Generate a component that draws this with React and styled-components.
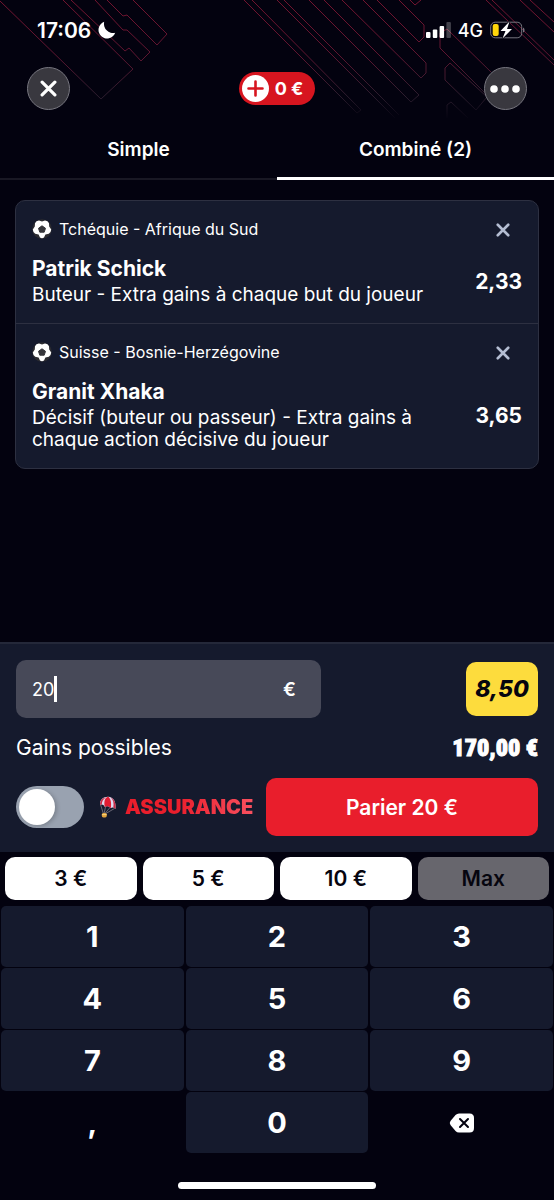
import React, { useState } from 'react';
import styled, { createGlobalStyle } from 'styled-components';

const GlobalStyle = createGlobalStyle`
  * {
    box-sizing: border-box;
  }
  body {
    margin: 0;
    background: #03020f;
    color: #fff;
    font-family: Inter, Roboto, sans-serif;
  }
  button, input {
    margin: 0;
    padding: 0;
    border: 0;
    color: inherit;
    font: inherit;
  }
  button {
    cursor: pointer;
  }
`;

const Page = styled.div`
  position: relative;
  display: flex;
  flex-direction: column;
  min-height: 100vh;
`;

const Pattern = styled.svg`
  position: absolute;
  top: 0;
  left: 0;
  width: 100%;
  pointer-events: none;
`;

const StatusBar = styled.div`
  position: relative;
  display: flex;
  align-items: center;
  justify-content: space-between;
  height: 60px;
  padding: 0 29px 0 37px;
`;

const StatusGroup = styled.div`
  display: flex;
  align-items: center;
  gap: 7px;
`;

const Time = styled.span`
  font-size: 21px;
  font-weight: 600;
`;

const Network = styled.span`
  font-size: 18px;
  font-weight: 500;
`;

const Header = styled.header`
  position: relative;
  display: flex;
  align-items: center;
  justify-content: space-between;
  padding: 7px 27px 10px;
`;

const RoundButton = styled.button`
  display: grid;
  place-items: center;
  width: 43px;
  height: 43px;
  border: 1px solid #77767f;
  border-radius: 50%;
  background: #39383f;
`;

const Balance = styled.button`
  display: flex;
  align-items: center;
  gap: 6px;
  height: 33px;
  padding: 0 12px 0 3px;
  border-radius: 17px;
  background: #d7151f;
  font-size: 18px;
  font-weight: 700;
`;

const Tabs = styled.nav`
  position: relative;
  display: grid;
  grid-template-columns: 1fr 1fr;
`;

const Tab = styled.button`
  height: 60px;
  padding-bottom: 2px;
  background: none;
  box-shadow: inset 0 ${(p) => (p.$active ? '-3px #fff' : '-2px #191824')};
  font-size: 19px;
  font-weight: 600;
`;

const Main = styled.main`
  flex: 1;
  padding: 20px 15px;
`;

const Card = styled.section`
  border: 1px solid #2d3041;
  border-radius: 10px;
  background: #151a2d;
`;

const Bet = styled.article`
  padding: 17px 16px;
  & + & {
    border-top: 1px solid #2d3041;
  }
`;

const BetTop = styled.div`
  display: flex;
  align-items: center;
  gap: 7px;
  height: 22px;
  margin-bottom: 16px;
  font-size: 16px;
`;

const Match = styled.span`
  flex: 1;
`;

const Remove = styled.button`
  display: grid;
  place-items: center;
  width: 38px;
  height: 26px;
  padding-top: 2px;
  background: none;
  color: #b4bdd2;
`;

const BetBody = styled.div`
  display: flex;
  align-items: center;
  justify-content: space-between;
  gap: 24px;
`;

const Player = styled.h2`
  margin: 0 0 2px;
  font-size: 21px;
  font-weight: 700;
  line-height: 26px;
`;

const Market = styled.p`
  max-width: 410px;
  margin: 0;
  font-size: 19px;
  line-height: 22px;
`;

const Odds = styled.span`
  font-size: 21px;
  font-weight: 700;
`;

const Slip = styled.section`
  display: flex;
  flex-direction: column;
  gap: 18px;
  padding: 16px;
  border-top: 2px solid #242839;
  background: #151a2d;
`;

const SlipRow = styled.div`
  display: flex;
  align-items: center;
  justify-content: space-between;
`;

const Stake = styled.label`
  display: flex;
  align-items: center;
  flex: 0 1 305px;
  height: 58px;
  padding: 0 25px 0 16px;
  border-radius: 10px;
  background: #474958;
  font-size: 18px;
`;

const StakeInput = styled.input`
  field-sizing: content;
  background: none;
  outline: none;
  caret-color: transparent;
`;

const Caret = styled.span`
  width: 3px;
  height: 26px;
  background: #fff;
`;

const Currency = styled.span`
  margin-left: auto;
  font-size: 19px;
  font-weight: 600;
`;

const TotalOdds = styled.output`
  display: grid;
  place-items: center;
  width: 72px;
  height: 54px;
  border-radius: 10px;
  background: #fddc3d;
  color: #06050f;
  font-size: 23px;
  font-style: italic;
  font-weight: 800;
`;

const GainsLabel = styled.span`
  font-size: 21px;
  line-height: 24px;
`;

const Gains = styled.output`
  font-family: "Roboto Condensed", "Open Sans Condensed", Roboto, sans-serif;
  font-size: 24px;
  font-weight: 900;
  line-height: 24px;
  -webkit-text-stroke: 1px #fff;
`;

const Switch = styled.input`
  flex: none;
  appearance: none;
  width: 68px;
  height: 42px;
  padding: 3px;
  border-radius: 21px;
  background: #99a2b0;
  cursor: pointer;
  &::before {
    content: '';
    display: block;
    width: 36px;
    height: 36px;
    border-radius: 50%;
    background: #fff;
    box-shadow: 2px 1px 4px rgba(0, 0, 0, 0.2);
  }
  &:checked {
    background: #e91e2c;
  }
  &:checked::before {
    margin-left: auto;
  }
`;

const Insurance = styled.label`
  display: flex;
  align-items: center;
  flex: 1;
  gap: 8px;
  padding-left: 15px;
  cursor: pointer;
`;

const InsuranceText = styled.span`
  background: linear-gradient(90deg, #e91e2c 40%, #f9505f);
  background-clip: text;
  color: transparent;
  font-size: 20px;
  font-weight: 900;
`;

const PlaceBet = styled.button`
  flex: 0 1 272px;
  height: 58px;
  border-radius: 10px;
  background: #e91e2c;
  font-size: 21px;
  font-weight: 600;
`;

const Chips = styled.div`
  display: grid;
  grid-template-columns: repeat(4, 1fr);
  gap: 6px;
  padding: 5px 5px 6px;
`;

const Chip = styled.button`
  height: 43px;
  border-radius: 10px;
  background: #fff;
  color: #06050f;
  font-size: 21px;
  font-weight: 600;
  &:disabled {
    background: #67666d;
    color: #06050f;
  }
`;

const Keypad = styled.div`
  display: grid;
  grid-template-columns: repeat(3, 1fr);
  gap: 1px 2px;
  padding: 0 1px;
`;

const Key = styled.button`
  display: grid;
  place-items: center;
  height: 61px;
  border-radius: 5px;
  background: ${(p) => (p.$plain ? 'none' : '#151a2d')};
  font-size: 29px;
  font-weight: 700;
`;

const HomeBar = styled.div`
  width: 198px;
  height: 7px;
  margin: 29px auto 11px;
  border-radius: 4px;
  background: #fff;
`;

const Cross = ({ size, width }) => (
  <svg width={size} height={size} viewBox="0 0 16 16" stroke="currentColor" strokeWidth={width} strokeLinecap="round">
    <path d="M2 2 14 14M14 2 2 14" />
  </svg>
);

const Ball = () => (
  <svg width="20" height="20" viewBox="0 0 20 20">
    <circle cx="10" cy="10" r="9.800" fill="#2b2b30" />
    <path
      d="M10 2.600 13 1.600Q16 1.800 17 4.200L17.200 7.600 19.200 10.500Q19 13.500 16.800 14.800L13.400 15.600 12 18.600Q10 19.800 8 18.600L6.600 15.600 3.200 14.800Q1 13.500 .8 10.500L2.800 7.600 3 4.200Q4 1.800 7 1.600Z"
      fill="#fff"
    />
    <path d="M10 6.800 13.500 9.300 12.200 13.200H7.800L6.500 9.300Z" fill="#36363b" stroke="#36363b" strokeLinejoin="round" />
  </svg>
);

const Parachute = () => (
  <svg width="18" height="22" viewBox="0 0 18 22">
    <path d="M1.500 8.500 4.500 18M6.500 11 5 18M11 11.500 5.500 18M15.500 12.500 6 18" stroke="#8d8793" strokeWidth=".7" fill="none" />
    <path d="M1.200 9C.2 3.800 4.500.6 9.200.8 14.200 1 17.300 5.500 16.500 13 14.500 10.800 12.500 11.500 11.800 12.200 10.300 9.900 7 9.600 5.800 11 4.800 8.600 2.600 8 1.200 9Z" fill="#dfd8ee" />
    <path d="M9.200.8C5.600 1.800 4.800 6 5.800 11 7 9.600 10.300 9.900 11.800 12.200 12.600 7.500 12 2.800 9.200.8Z" fill="#e21c32" />
    <path d="M7 1.200C3.200 2 .6 4.800 1.200 9L2.800 8.300C2.800 5.400 4.400 2.800 7 1.200ZM11.800 1.600C14.400 4 15 7.500 14.300 11.200L16.500 13C17.200 7.500 15.500 3.300 11.800 1.600Z" fill="#c92b46" />
    <rect x="2.800" y="17" width="5" height="4.400" rx="1.600" fill="#e0a33c" />
    <path d="M3 18.600H7.600" stroke="#f8d37c" />
  </svg>
);

const BackgroundPattern = () => (
  <Pattern viewBox="0 0 554 120" fill="none" aria-hidden="true">
    <defs>
      <linearGradient id="fade" gradientUnits="userSpaceOnUse" x1="0" y1="0" x2="0" y2="120">
        <stop offset="0" stopColor="#73142f" />
        <stop offset=".45" stopColor="#5f1530" />
        <stop offset=".8" stopColor="#2c1d2e" />
        <stop offset="1" stopColor="#03020f" />
      </linearGradient>
    </defs>
    <g stroke="url(#fade)">
      <path d="M0 1 101 99 133 69 63 0M71 0 125 51 129 48 141 61 150 52 127 30H123L95 0M107 0 123 16 127 15 157 45 167 34 133 0" />
      <path d="M244 0 357 113 361 110 252 0M277 0 395 118M284 0 399 115M309 0 411 102 419 95 324 0" />
      <path d="M342 0 421 78 426 73V63L363 0M377 0 419 42 424 37V25L399 0M410 0 415 5 421 0" />
      <path d="M486 0 554 65M492 0 554 60M520 0 554 32M530 0 554 22" />
      <path d="M491 72 447 29 440 33V48L487 95M476 110 445 80V68L450 63 487 97ZM447 118V105L451 102 468 118" />
    </g>
  </Pattern>
);

const bets = [
  {
    match: 'Tchéquie - Afrique du Sud',
    player: 'Patrik Schick',
    market: 'Buteur - Extra gains à chaque but du joueur',
    odds: '2,33',
  },
  {
    match: 'Suisse - Bosnie-Herzégovine',
    player: 'Granit Xhaka',
    market: 'Décisif (buteur ou passeur) - Extra gains à chaque action décisive du joueur',
    odds: '3,65',
  },
];

const TOTAL_ODDS = 8.5;

const format = (n) => n.toFixed(2).replace('.', ',');

export default function App() {
  const [stake, setStake] = useState('20');
  const [tab, setTab] = useState('combine');
  const amount = parseFloat(stake.replace(',', '.')) || 0;

  return (
    <Page>
      <GlobalStyle />
      <BackgroundPattern />
      <StatusBar>
        <StatusGroup>
          <Time>17:06</Time>
          <svg width="18" height="18" viewBox="0 0 18 18">
            <path d="M6.200.8A8.600 8.600 0 1 0 17.200 11.800 9.200 9.200 0 0 1 6.200.8Z" fill="#fff" />
          </svg>
        </StatusGroup>
        <StatusGroup>
          <svg width="25" height="16" viewBox="0 0 25 16" fill="#fff">
            <rect x="0" y="10" width="4.500" height="6" rx="1" />
            <rect x="6.800" y="7.500" width="4.500" height="8.500" rx="1" />
            <rect x="13.600" y="4" width="4.500" height="12" rx="1" />
            <rect x="20.400" y="0" width="4.500" height="16" rx="1" opacity=".25" />
          </svg>
          <Network>4G</Network>
          <svg width="35" height="18" viewBox="0 0 35 18">
            <rect x=".7" y="1.200" width="31" height="15.600" rx="4.500" fill="none" stroke="#77767f" />
            <path d="M33 6.500Q34.600 7 34.600 9T33 11.500Z" fill="#77767f" />
            <rect x="2.700" y="3" width="6" height="12" rx="2" fill="#ffd60a" />
            <path d="M19.500.5 10.500 10H15.500L12.500 17.500 22 8H17Z" fill="#fff" stroke="#03020f" strokeWidth="1.500" paintOrder="stroke" />
          </svg>
        </StatusGroup>
      </StatusBar>

      <Header>
        <RoundButton aria-label="Fermer"><Cross size={17} width={3} /></RoundButton>
        <Balance>
          <svg width="27" height="27" viewBox="0 0 27 27">
            <circle cx="13.500" cy="13.500" r="13.500" fill="#fff" />
            <path d="M13.500 6.500V20.500M6.500 13.500H20.500" stroke="#d7151f" strokeWidth="2.600" strokeLinecap="round" />
          </svg>
          0 €
        </Balance>
        <RoundButton aria-label="Plus d'options">
          <svg width="30" height="8" viewBox="0 0 30 8" fill="#fff">
            <circle cx="4" cy="4" r="3.800" />
            <circle cx="15" cy="4" r="3.800" />
            <circle cx="26" cy="4" r="3.800" />
          </svg>
        </RoundButton>
      </Header>

      <Tabs>
        <Tab $active={tab === 'simple'} onClick={() => setTab('simple')}>Simple</Tab>
        <Tab $active={tab === 'combine'} onClick={() => setTab('combine')}>Combiné (2)</Tab>
      </Tabs>

      <Main>
        <Card>
          {bets.map((bet) => (
            <Bet key={bet.player}>
              <BetTop>
                <Ball />
                <Match>{bet.match}</Match>
                <Remove aria-label="Supprimer"><Cross size={14} width={3} /></Remove>
              </BetTop>
              <BetBody>
                <div>
                  <Player>{bet.player}</Player>
                  <Market>{bet.market}</Market>
                </div>
                <Odds>{bet.odds}</Odds>
              </BetBody>
            </Bet>
          ))}
        </Card>
      </Main>

      <Slip>
        <SlipRow>
          <Stake>
            <StakeInput
              aria-label="Mise"
              inputMode="decimal"
              value={stake}
              onChange={(e) => setStake(e.target.value)}
            />
            <Caret />
            <Currency>€</Currency>
          </Stake>
          <TotalOdds>{format(TOTAL_ODDS)}</TotalOdds>
        </SlipRow>
        <SlipRow>
          <GainsLabel>Gains possibles</GainsLabel>
          <Gains>{format(amount * TOTAL_ODDS)} €</Gains>
        </SlipRow>
        <SlipRow>
          <Switch type="checkbox" id="assurance" />
          <Insurance htmlFor="assurance">
            <Parachute />
            <InsuranceText>ASSURANCE</InsuranceText>
          </Insurance>
          <PlaceBet>Parier {stake} €</PlaceBet>
        </SlipRow>
      </Slip>

      <Chips>
        {['3', '5', '10'].map((v) => (
          <Chip key={v} onClick={() => setStake(v)}>{v} €</Chip>
        ))}
        <Chip disabled>Max</Chip>
      </Chips>
      <Keypad>
        {['1', '2', '3', '4', '5', '6', '7', '8', '9', ',', '0'].map((k) => (
          <Key key={k} $plain={k === ','} onClick={() => setStake(stake + k)}>{k}</Key>
        ))}
        <Key $plain aria-label="Effacer" onClick={() => setStake(stake.slice(0, -1))}>
          <svg width="26" height="20" viewBox="0 0 26 20">
            <path d="M10 .5H20.500Q25 .5 25 5V15Q25 19.500 20.500 19.500H10Q8 19.500 6.500 18L1.500 12Q0 10 1.500 8L6.500 2Q8 .5 10 .5Z" fill="#fff" />
            <path d="M11 6 19 14M19 6 11 14" stroke="#03020f" strokeWidth="2" strokeLinecap="round" />
          </svg>
        </Key>
      </Keypad>
      <HomeBar />
    </Page>
  );
}
